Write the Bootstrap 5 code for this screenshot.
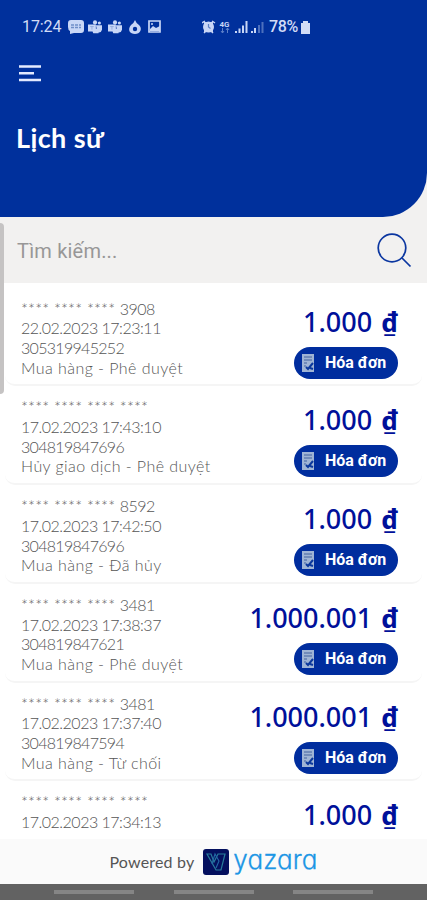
<!DOCTYPE html>
<html lang="vi">
<head>
<meta charset="utf-8">
<meta name="viewport" content="width=device-width, initial-scale=1">
<title>Lịch sử</title>
<link href="https://cdn.jsdelivr.net/npm/bootstrap@5.3.0/dist/css/bootstrap.min.css" rel="stylesheet">
<style>
body{background:#f2f1f0;font-family:Lato,"Noto Sans",sans-serif}
.screen{width:427px;height:900px}
.hero{height:216.500px;background:#00309c;border-bottom-right-radius:44px;color:#fff}
.status{height:53px;padding:1px 0 0 22px;font:400 16px/20px Roboto,sans-serif;color:#d2dcf6}
.status .clock{width:46px;letter-spacing:-.1px}
.menu-btn{margin:12px 0 0 19px;line-height:0}
.title{font:700 27px/36px Lato,sans-serif;margin:38px 0 0 16px;letter-spacing:.4px}
.search{height:66px;padding:0 15px 0 17px;background:#f2f1f0}
.search span{font:400 20px/28px Roboto,"Noto Sans",sans-serif;color:#989797;letter-spacing:.2px;padding-top:2px}
.history{height:556.500px;background:#fff;padding:5px 5px 0}
.entry{height:98.8px;flex:none;padding:11px 24px 0 16px;border-bottom:2px solid #f5f5f5;border-radius:10px}
.info{font:300 16px/19.7px Lato,sans-serif;color:#555}
.info .stars{letter-spacing:.28px}
.info .stars b{font-weight:300;letter-spacing:-.6px}
.info .date{letter-spacing:-.5px}
.info .ref{letter-spacing:-.7px}
.info .kind{letter-spacing:.44px}
.amount{font:500 27px/38px "Noto Sans",sans-serif;color:#00109a;margin-top:4px}
.amount b{font-weight:700;font-size:26px;margin-left:2px}
.invoice{width:104px;height:32px;margin-top:6px;background:#002d9e;color:#fff;font:700 16px/32px Roboto,sans-serif;padding-left:8px}
.invoice svg{margin-right:11px}
.brand-bar{height:45px;background:#fafafa;color:#555}
.brand-bar .by{font:400 16px/24px Lato,sans-serif;letter-spacing:.18px}
.brand-bar .name{font:300 26px/30px Inter,Lato,sans-serif;font-feature-settings:"cv11";color:#1c96e5;-webkit-text-stroke:.3px #1c96e5;margin-top:-4px;letter-spacing:.1px}
.brand-bar svg{margin:0 4px 0 9px}
.sysnav{height:16px;background:#626262;padding:0 54px}
.sysnav i{width:80px;height:4px;background:#858585}
.thumb{left:0;top:223px;width:4px;height:171px;background:#c5c3c3;border-radius:0 4px 4px 0}
</style>
<script src="https://cdn.jsdelivr.net/npm/bootstrap@5.3.0/dist/js/bootstrap.bundle.min.js"></script>
</head>
<body>
<svg class="d-none" xmlns="http://www.w3.org/2000/svg">
<symbol id="teams" viewBox="0 0 16 16"><path d="M0 5h9v8H0zM9 6h7v5q-1 4-5 3zM4 10h8v5H6z"/><circle cx="8" cy="2.800" r="2.400"/><circle cx="13" cy="3.400" r="1.800"/><path d="M2.500 7.500h4M4.500 7.500v3.500" stroke="#8fa8da"/></symbol>
<symbol id="receipt" viewBox="0 0 12 18"><path d="M0 0h12v18H0z" fill="#9fb4d5"/><path d="M2 3h8M2 6h8M2 9h3M2 12h2" stroke="#42639f"/><path d="M4 13l2 2 5-6M8 14l3 1" fill="none" stroke="#0b389d" stroke-width="2"/></symbol>
</svg>
<div class="screen d-flex flex-column position-relative overflow-hidden">
<header class="hero flex-shrink-0">
<div class="status d-flex align-items-center">
<span class="clock">17:24</span>
<svg width="96" height="16" viewBox="0 0 96 16" fill="#c8d6f6">
<path d="M3 1h10q3 0 3 3v7q0 3-3 3H6L2 15V12Q0 11 0 8V4q0-3 3-3z"/><path d="M3 6h10M3 8.500h10" stroke="#6f8ec8" stroke-width="1.300" stroke-dasharray="3 1"/>
<use href="#teams" x="19" y="1" width="16" height="14"/><use href="#teams" x="39" y="1" width="16" height="14"/>
<path d="M67 1q1 3 4 5c4 4 1 9-4 9s-8-4-4-9q3-2 4-5z"/><circle cx="67" cy="10" r="2.200" fill="#00309c"/>
<path d="M81 2h11v11H81z" fill="none" stroke="#c8d6f6" stroke-width="1.700"/><path d="M82 12V10l3-3 3 2 4-2v5z"/><circle cx="84" cy="5" r="1"/>
</svg>
<svg class="ms-auto" width="64" height="16" viewBox="0 0 64 16" fill="#c8d6f6">
<path d="M2 3h9v10H2z"/><circle cx="6.500" cy="8" r="5.500"/><path d="M0 4l3-2M13 4l-3-2M2 14l2-2M11 14l-2-2" stroke="#c8d6f6" stroke-width="1.500"/><path d="M6.500 5v3l2 1.500" fill="none" stroke="#5d7fc4" stroke-width="1.200"/>
<text x="17.500" y="8" font-size="8" font-weight="700" textLength="10" lengthAdjust="spacingAndGlyphs">4G</text><path d="M20.500 14V9M19 12l1.500 2 1.500-2M25.500 9v5M24 11l1.500-2 1.500 2" fill="none" stroke="#5d7fc8"/>
<path d="M33 12h2v2h-2zM36.500 9.500h2V14h-2zM40 6.500h2V14h-2zM43.500 2h2v12h-2z"/><path d="M49 12h2v2h-2zM52 9h2v5h-2z"/><path d="M56 6h2v8h-2zM59.500 3h2v11h-2z" fill="#4d70bd"/>
</svg>
<span class="fw-medium" style="margin-left:3px;letter-spacing:-.3px">78%</span>
<svg style="margin:0 117px 0 3px" width="9" height="13" viewBox="0 0 9 13" fill="#d2dcf6"><path d="M2 2V0h5v2h2v11H0V2z"/></svg>
</div>
<div class="menu-btn"><svg width="22" height="17" viewBox="0 0 22 17" stroke="#e4eaff" stroke-width="2.400"><path d="M0 1.500h22M0 8.200h15M0 15h22"/></svg></div>
<h1 class="title mb-0">Lịch sử</h1>
</header>
<div class="search d-flex align-items-center justify-content-between flex-shrink-0">
<span>Tìm kiếm...</span>
<svg width="36" height="36" viewBox="0 0 36 36" fill="none" stroke="#0b36a0" stroke-width="1.700"><circle cx="16" cy="16" r="13.800"/><path d="M26 26l8.500 8.500"/></svg>
</div>
<main class="history d-flex flex-column overflow-hidden flex-shrink-0">
<article class="entry d-flex justify-content-between"><div class="info"><div class="stars">**** **** **** <b>3908</b></div><div class="date">22.02.2023 17:23:11</div><div class="ref">305319945252</div><div class="kind">Mua hàng - Phê duyệt</div></div><div class="d-flex flex-column align-items-end"><div class="amount">1.000 <b>₫</b></div><div class="invoice rounded-pill d-flex align-items-center"><svg width="12" height="18"><use href="#receipt"/></svg>Hóa đơn</div></div></article>
<article class="entry d-flex justify-content-between"><div class="info"><div class="stars">**** **** **** ****</div><div class="date">17.02.2023 17:43:10</div><div class="ref">304819847696</div><div class="kind">Hủy giao dịch - Phê duyệt</div></div><div class="d-flex flex-column align-items-end"><div class="amount">1.000 <b>₫</b></div><div class="invoice rounded-pill d-flex align-items-center"><svg width="12" height="18"><use href="#receipt"/></svg>Hóa đơn</div></div></article>
<article class="entry d-flex justify-content-between"><div class="info"><div class="stars">**** **** **** <b>8592</b></div><div class="date">17.02.2023 17:42:50</div><div class="ref">304819847696</div><div class="kind">Mua hàng - Đã hủy</div></div><div class="d-flex flex-column align-items-end"><div class="amount">1.000 <b>₫</b></div><div class="invoice rounded-pill d-flex align-items-center"><svg width="12" height="18"><use href="#receipt"/></svg>Hóa đơn</div></div></article>
<article class="entry d-flex justify-content-between"><div class="info"><div class="stars">**** **** **** <b>3481</b></div><div class="date">17.02.2023 17:38:37</div><div class="ref">304819847621</div><div class="kind">Mua hàng - Phê duyệt</div></div><div class="d-flex flex-column align-items-end"><div class="amount">1.000.001 <b>₫</b></div><div class="invoice rounded-pill d-flex align-items-center"><svg width="12" height="18"><use href="#receipt"/></svg>Hóa đơn</div></div></article>
<article class="entry d-flex justify-content-between"><div class="info"><div class="stars">**** **** **** <b>3481</b></div><div class="date">17.02.2023 17:37:40</div><div class="ref">304819847594</div><div class="kind">Mua hàng - Từ chối</div></div><div class="d-flex flex-column align-items-end"><div class="amount">1.000.001 <b>₫</b></div><div class="invoice rounded-pill d-flex align-items-center"><svg width="12" height="18"><use href="#receipt"/></svg>Hóa đơn</div></div></article>
<article class="entry d-flex justify-content-between"><div class="info"><div class="stars">**** **** **** ****</div><div class="date">17.02.2023 17:34:13</div></div><div class="amount">1.000 <b>₫</b></div></article>
</main>
<footer class="brand-bar d-flex justify-content-center align-items-center flex-shrink-0">
<span class="by">Powered by</span>
<svg width="26" height="26" viewBox="0 0 26 26"><rect width="26" height="26" rx="3" fill="#04105e"/><path d="M4 5h4l3 8 4-8h7l-4 16h-5L4 5z" fill="none" stroke="#287c9c" stroke-width="1.200"/><path d="M9 15l3-10 4 7-3 7" fill="none" stroke="#2369a6" stroke-width="1.100"/></svg>
<span class="name">yazara</span>
</footer>
<div class="sysnav d-flex justify-content-between align-items-center flex-shrink-0"><i></i><i></i><i></i></div>
<div class="thumb position-absolute"></div>
</div>
</body>
</html>
